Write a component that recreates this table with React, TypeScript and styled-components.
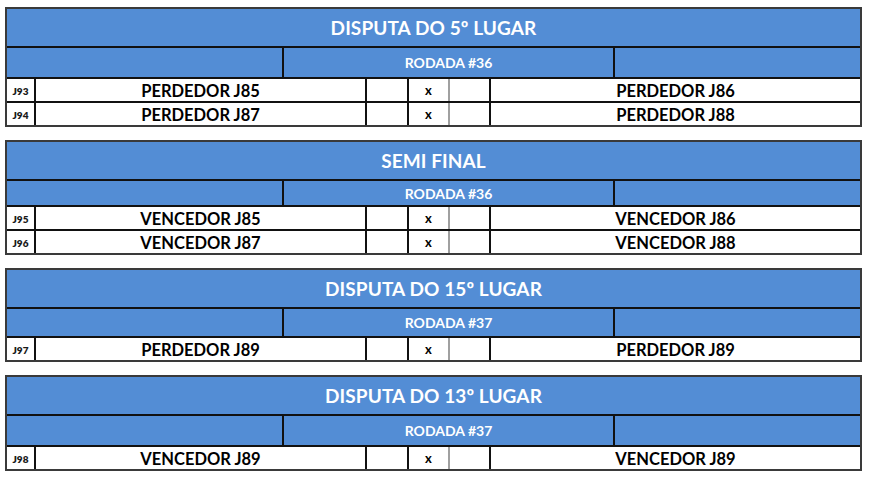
import React from "react";
import styled, { createGlobalStyle } from "styled-components";

const GlobalStyle = createGlobalStyle`
  body {
    margin: 0;
    background: #ffffff;
    font-family: "Lato", "Open Sans", sans-serif;
  }
`;

const Page = styled.div`
  padding: 7px 0 0 5px;
  display: flex;
  flex-direction: column;
  gap: 13px;
`;

const Block = styled.div`
  width: 853px;
  border: 2px solid #3a3a3a;
  background: #fff;
`;

const Title = styled.div`
  height: 37px;
  background: #538dd5;
  color: #fff;
  font-weight: 700;
  font-size: 19px;
  display: flex;
  align-items: center;
  justify-content: center;
  letter-spacing: 0.1px;
`;

const SubRow = styled.div<{ $h: number }>`
  height: ${(p) => p.$h}px;
  border-top: 2px solid #111;
  background: #538dd5;
  display: grid;
  grid-template-columns: 275px 331px 1fr;
`;

const SubCell = styled.div`
  display: flex;
  align-items: center;
  justify-content: center;
  color: #fff;
  font-weight: 700;
  font-size: 14px;
  & + & {
    border-left: 2px solid #111;
  }
`;

const GameRow = styled.div`
  height: 22px;
  border-top: 2px solid #111;
  display: grid;
  grid-template-columns: 27px 331px 42px 41px 41px 1fr;
`;

const Cell = styled.div<{ $light?: boolean }>`
  display: flex;
  align-items: center;
  justify-content: center;
  border-left: 2px solid ${(p) => (p.$light ? "#a0a0a0" : "#111")};
  color: #000;
  line-height: 1;
  &:first-child {
    border-left: none;
  }
`;

const Code = styled(Cell)`
  font-size: 10px;
  font-weight: 800;
  color: #1a1a1a;
  padding-top: 2px;
`;

const Team = styled(Cell)`
  font-size: 16.5px;
  font-weight: 700;
  padding-top: 2px;
`;

const Versus = styled(Cell)`
  font-size: 13px;
  font-weight: 700;
`;

type Game = { code: string; home: string; away: string };
type Stage = { title: string; round: string; sub: number; games: Game[] };

const stages: Stage[] = [
  {
    title: "DISPUTA DO 5º LUGAR",
    round: "RODADA #36",
    sub: 29,
    games: [
      { code: "J93", home: "PERDEDOR J85", away: "PERDEDOR J86" },
      { code: "J94", home: "PERDEDOR J87", away: "PERDEDOR J88" },
    ],
  },
  {
    title: "SEMI FINAL",
    round: "RODADA #36",
    sub: 24,
    games: [
      { code: "J95", home: "VENCEDOR J85", away: "VENCEDOR J86" },
      { code: "J96", home: "VENCEDOR J87", away: "VENCEDOR J88" },
    ],
  },
  {
    title: "DISPUTA DO 15º LUGAR",
    round: "RODADA #37",
    sub: 27,
    games: [{ code: "J97", home: "PERDEDOR J89", away: "PERDEDOR J89" }],
  },
  {
    title: "DISPUTA DO 13º LUGAR",
    round: "RODADA #37",
    sub: 29,
    games: [{ code: "J98", home: "VENCEDOR J89", away: "VENCEDOR J89" }],
  },
];

const App = () => {
  return (
    <>
      <GlobalStyle />
      <Page>
        {stages.map((stage) => (
          <Block key={stage.title}>
            <Title>{stage.title}</Title>
            <SubRow $h={stage.sub}>
              <SubCell />
              <SubCell>{stage.round}</SubCell>
              <SubCell />
            </SubRow>
            {stage.games.map((game) => (
              <GameRow key={game.code}>
                <Code>{game.code}</Code>
                <Team>{game.home}</Team>
                <Cell />
                <Versus>x</Versus>
                <Cell $light />
                <Team>{game.away}</Team>
              </GameRow>
            ))}
          </Block>
        ))}
      </Page>
    </>
  );
};

export default App;
